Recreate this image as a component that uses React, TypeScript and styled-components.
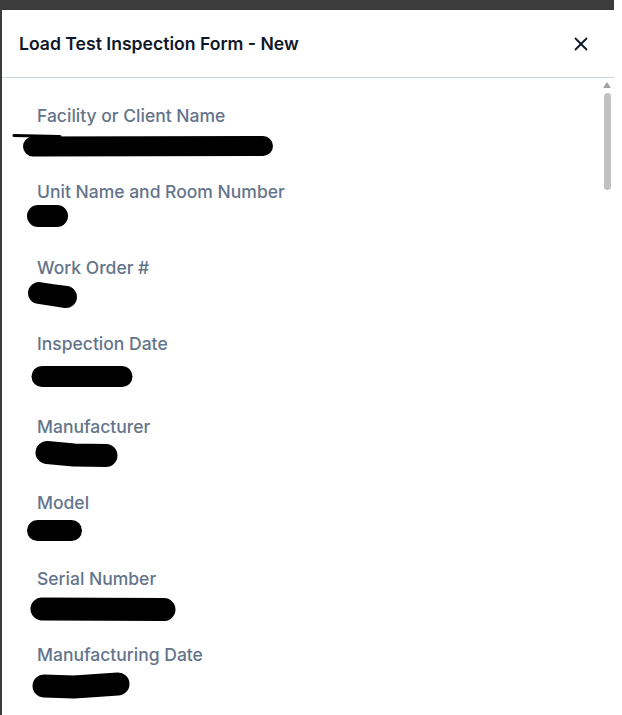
import styled, { createGlobalStyle } from "styled-components";
import { X } from "lucide-react";

type Mark = { points: [number, number][]; width: number };

type Field = {
  label: string;
  marks: Mark[];
  tall?: boolean;
};

// redaction scribbles, x relative to svg left (page x - 10), y relative to value row top
const fields: Field[] = [
  {
    label: "Facility or Client Name",
    marks: [
      { points: [[23, 10.5], [253, 10]], width: 20 },
      { points: [[4, -0.5], [50, 0.5]], width: 3 },
    ],
  },
  { label: "Unit Name and Room Number", marks: [{ points: [[28, 4], [47, 4]], width: 22 }] },
  { label: "Work Order #", marks: [{ points: [[29, 5], [42, 7], [56, 9]], width: 22 }] },
  { label: "Inspection Date", marks: [{ points: [[32, 12.5], [112, 12.5]], width: 21 }], tall: true },
  { label: "Manufacturer", marks: [{ points: [[37, 5.5], [64, 8], [96, 8.5]], width: 23 }] },
  { label: "Model", marks: [{ points: [[27.5, 7.5], [61.5, 7.5]], width: 21 }] },
  { label: "Serial Number", marks: [{ points: [[32, 10], [154, 10.5]], width: 23 }] },
  { label: "Manufacturing Date", marks: [{ points: [[34, 11], [64, 12], [108, 9]], width: 23 }] },
];

export default function App() {
  return (
    <>
      <Global />
      <Backdrop>
        <Dialog>
          <Header>
            <Title>Load Test Inspection Form - New</Title>
            <CloseButton aria-label="Close">
              <X size={22} strokeWidth={2} />
            </CloseButton>
          </Header>
          <Body>
            <FieldList>
              {fields.map((f) => (
                <FieldBlock key={f.label}>
                  <Label>{f.label}</Label>
                  <Value $tall={f.tall}>
                    <Scribble viewBox="0 -10 300 40" width={300} height={40}>
                      {f.marks.map((m, i) => (
                        <polyline
                          key={i}
                          points={m.points.map((p) => p.join(",")).join(" ")}
                          fill="none"
                          stroke="#000"
                          strokeWidth={m.width}
                          strokeLinecap="round"
                          strokeLinejoin="round"
                        />
                      ))}
                    </Scribble>
                  </Value>
                </FieldBlock>
              ))}
            </FieldList>
            <ScrollRail>
              <ScrollArrow />
              <ScrollThumb />
            </ScrollRail>
          </Body>
        </Dialog>
      </Backdrop>
    </>
  );
}

const Global = createGlobalStyle`
  html, body {
    margin: 0;
    padding: 0;
    height: 100%;
    overflow: hidden;
    background: #fff;
  }
  #root {
    height: 100%;
  }
`;

const Backdrop = styled.div`
  width: 614px;
  height: 100vh;
  padding: 10px 0 0 2px;
  box-sizing: border-box;
  background: #3c3c3c;
  display: flex;
  font-family: Inter, "Noto Sans", sans-serif;
`;

const Dialog = styled.div`
  flex: 1;
  background: #fff;
  display: flex;
  flex-direction: column;
  min-height: 0;
`;

const Header = styled.div`
  height: 67px;
  flex-shrink: 0;
  border-bottom: 1px solid #cbd5e1;
  display: flex;
  align-items: center;
  justify-content: space-between;
  padding: 0 22px 0 17px;
`;

const Title = styled.h2`
  margin: 0;
  font-size: 17.6px;
  font-weight: 600;
  color: #0f172a;
`;

const CloseButton = styled.button`
  border: none;
  background: none;
  padding: 0;
  width: 22px;
  height: 22px;
  display: flex;
  align-items: center;
  justify-content: center;
  color: #0f172a;
  cursor: pointer;
`;

const Body = styled.div`
  flex: 1;
  min-height: 0;
  display: flex;
  overflow: hidden;
`;

const FieldList = styled.div`
  flex: 1;
  display: flex;
  flex-direction: column;
  gap: 20px;
  padding: 26px 35px 0;
`;

const FieldBlock = styled.div`
  display: flex;
  flex-direction: column;
  gap: 8px;
`;

const Label = styled.label`
  font-size: 17.5px;
  line-height: 24px;
  font-weight: 500;
  color: #64748b;
`;

const Value = styled.div<{ $tall?: boolean }>`
  height: ${(p) => (p.$tall ? 31 : 24)}px;
`;

const Scribble = styled.svg`
  display: block;
  margin: -10px 0 0 -27px;
  overflow: visible;
`;

const ScrollRail = styled.div`
  width: 14px;
  flex-shrink: 0;
  display: flex;
  flex-direction: column;
  align-items: center;
  padding-top: 4px;
  gap: 5px;
`;

const ScrollArrow = styled.div`
  width: 0;
  height: 0;
  border-left: 4.5px solid transparent;
  border-right: 4.5px solid transparent;
  border-bottom: 6px solid #a3a3a3;
`;

const ScrollThumb = styled.div`
  width: 7px;
  height: 97px;
  border-radius: 4px;
  background: #c1c1c1;
`;
